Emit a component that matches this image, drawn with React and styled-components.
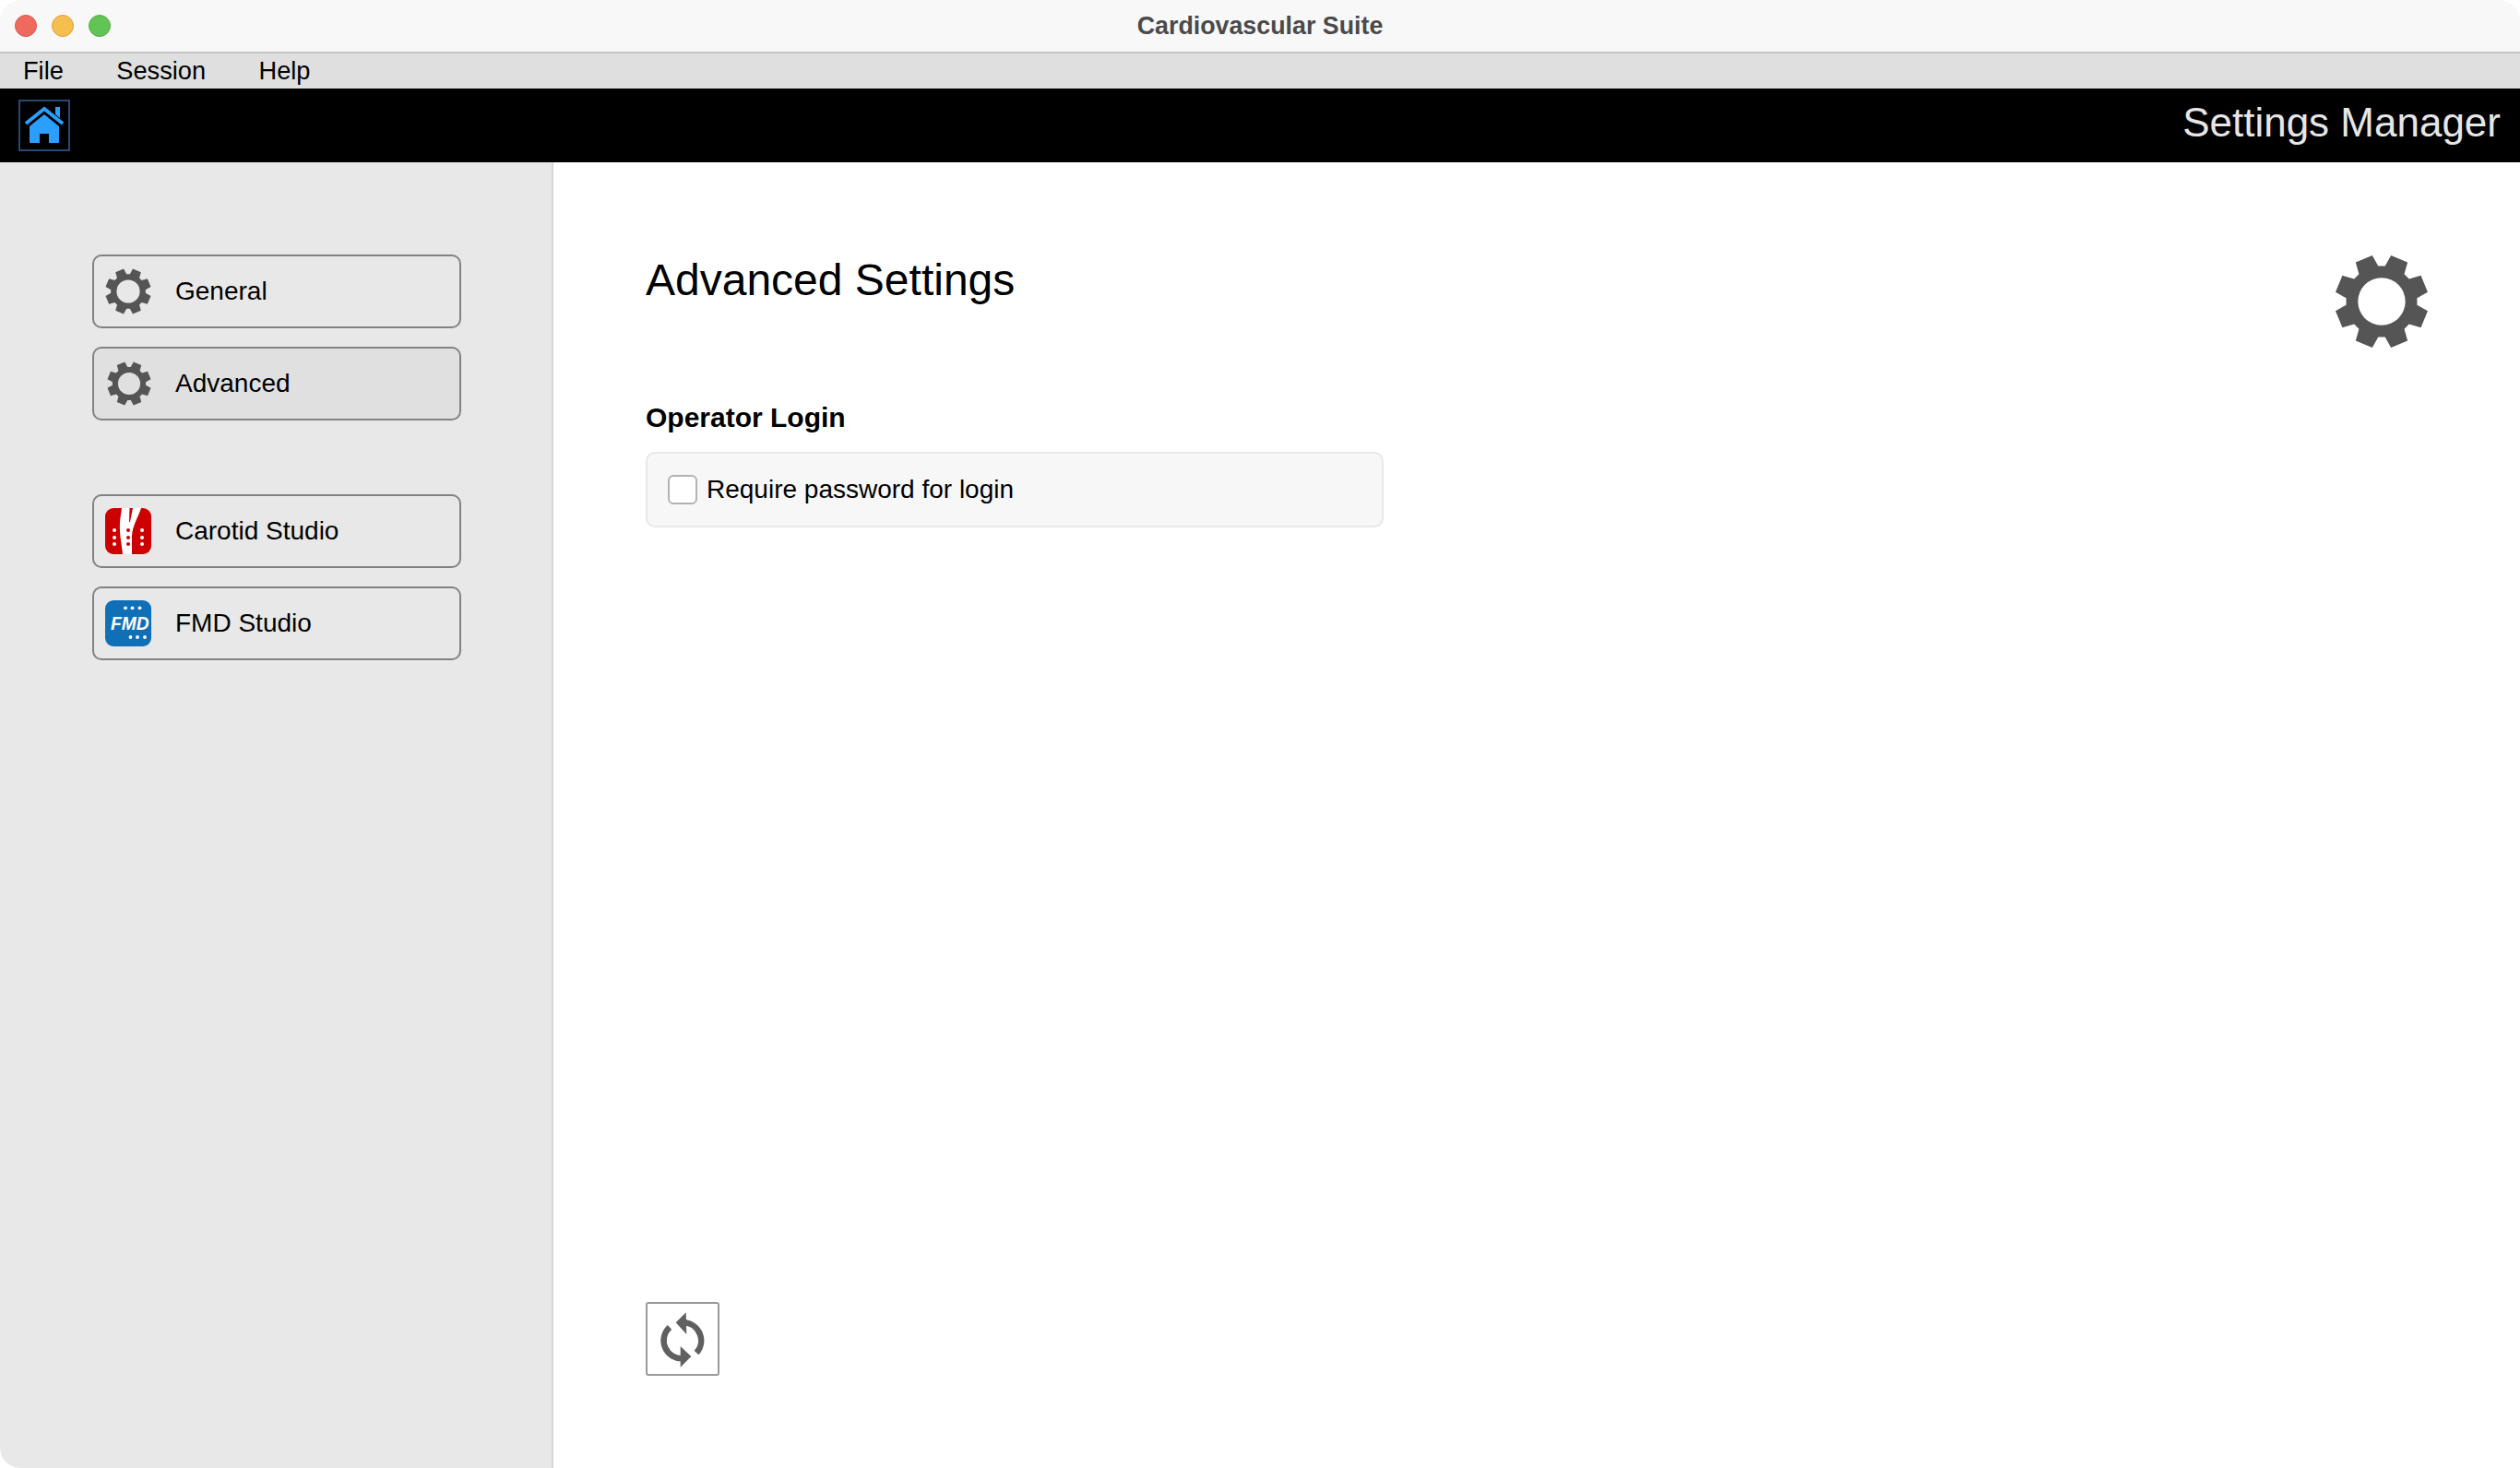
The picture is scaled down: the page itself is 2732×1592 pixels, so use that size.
import React from "react";
import styled, { createGlobalStyle } from "styled-components";

const GlobalStyle = createGlobalStyle`
  html, body {
    margin: 0;
    padding: 0;
    background: #ffffff;
  }
  * {
    box-sizing: border-box;
  }
`;

const Window = styled.div`
  width: 2732px;
  height: 1592px;
  display: flex;
  flex-direction: column;
  overflow: hidden;
  border-radius: 22px;
  font-family: "Liberation Sans", Arial, sans-serif;
  color: #000000;
`;

const TitleBar = styled.div`
  position: relative;
  height: 58px;
  flex: none;
  display: flex;
  align-items: center;
  justify-content: center;
  background: #f8f8f8;
  border-bottom: 2px solid #c4c4c4;
`;

const Lights = styled.div`
  position: absolute;
  left: 16px;
  top: 16px;
  display: flex;
  gap: 16px;
`;

const Light = styled.span`
  width: 24px;
  height: 24px;
  border-radius: 50%;
  background: ${p => p.$color};
  border: 1px solid ${p => p.$edge};
`;

const WindowTitle = styled.div`
  font-size: 26.8px;
  font-weight: bold;
  color: #4a4a4a;
`;

const MenuBar = styled.div`
  height: 38px;
  flex: none;
  display: flex;
  align-items: center;
  padding-left: 25px;
  gap: 57.5px;
  background: #dfdfdf;
  font-size: 27.2px;
`;

const TopBar = styled.div`
  height: 80px;
  flex: none;
  display: flex;
  align-items: center;
  justify-content: space-between;
  padding: 0 21px 0 20px;
  background: #000000;
`;

const HomeButton = styled.div`
  width: 56px;
  height: 56px;
  border: 2px solid #264a73;
`;

const ScreenName = styled.div`
  font-size: 44px;
  color: #e6e6e6;
  margin-top: -6px;
`;

const Body = styled.div`
  flex: 1;
  display: flex;
  min-height: 0;
`;

const Sidebar = styled.div`
  width: 600px;
  flex: none;
  display: flex;
  flex-direction: column;
  padding: 100px 0 0 100px;
  background: #e8e8e8;
  border-right: 2px solid #d6d6d6;
`;

const NavGroup = styled.div`
  display: flex;
  flex-direction: column;
  gap: 20px;
  margin-bottom: 80px;
`;

const NavButton = styled.div`
  width: 400px;
  height: 80px;
  display: flex;
  align-items: center;
  padding-left: 12px;
  gap: 26px;
  border: 2px solid #828282;
  border-radius: 10px;
  background: ${p => (p.$active ? "#e0e0e0" : "#e8e8e8")};
  font-size: 28px;
`;

const IconSlot = styled.span`
  width: 50px;
  height: 50px;
  flex: none;
  display: flex;
  align-items: center;
  justify-content: ${p => (p.$end ? "flex-end" : "center")};
`;

const Content = styled.div`
  flex: 1;
  display: flex;
  flex-direction: column;
  padding: 100px 99px 100px 100px;
  background: #ffffff;
`;

const HeaderRow = styled.div`
  height: 100px;
  flex: none;
  display: flex;
  justify-content: space-between;
  align-items: flex-start;
`;

const PageTitle = styled.h1`
  margin: 0;
  font-size: 48px;
  font-weight: normal;
  line-height: 56px;
`;

const SectionTitle = styled.h2`
  margin: 59px 0 0;
  font-size: 30px;
  font-weight: bold;
  line-height: 36px;
`;

const OptionPanel = styled.div`
  width: 800px;
  height: 82px;
  margin-top: 19px;
  display: flex;
  align-items: center;
  padding-left: 22px;
  gap: 10px;
  background: #f7f7f7;
  border: 2px solid #e8e8e8;
  border-radius: 10px;
  font-size: 28px;
`;

const CheckBox = styled.span`
  width: 32px;
  height: 32px;
  flex: none;
  background: #ffffff;
  border: 2px solid #b2b2b2;
  border-radius: 6px;
`;

const Spacer = styled.div`
  flex: 1;
`;

const ReloadButton = styled.div`
  width: 80px;
  height: 80px;
  border: 2px solid #9a9a9a;
  border-radius: 3px;
  background: #ffffff;
`;

// gear outline: 8 teeth, two of them straddling the top
function gearPath() {
  const pts = [];
  for (let i = 0; i < 8; i++) {
    const mid = 22.5 + i * 45;
    [[mid - 17, 38.6], [mid - 11, 51], [mid + 11, 51], [mid + 17, 38.6]].forEach(([deg, r]) => {
      const a = (deg * Math.PI) / 180;
      pts.push(`${(r * Math.sin(a)).toFixed(2)} ${(-r * Math.cos(a)).toFixed(2)}`);
    });
  }
  return `M${pts.join("L")}Z M25.7 0A25.7 25.7 0 1 0 -25.7 0A25.7 25.7 0 1 0 25.7 0Z`;
}

const Gear = ({ size }) => (
  <svg width={size} height={size} viewBox="-51 -51 102 102">
    <path d={gearPath()} fill="#555555" fillRule="evenodd" />
  </svg>
);

const HomeIcon = () => (
  <svg width="52" height="52" viewBox="0 0 52 52">
    <path d="M6 24 L26 8 L46 24" fill="none" stroke="#2b9fff" strokeWidth="4" />
    <path d="M38 6h5v12l-5-4z" fill="#2b9fff" />
    <path d="M26 14 L42 27 V44 Q42 45 41 45 H31 V35 H21 V45 H11 Q10 45 10 44 V27Z" fill="#2b9fff" />
  </svg>
);

const ReloadIcon = () => (
  <svg width="76" height="76" viewBox="1 1 76 76">
    <path d="M40 21.3 A19.5 19.5 0 0 1 54 54" fill="none" stroke="#606060" strokeWidth="6.5" />
    <path d="M42.7 10.3 L31.7 21.3 L43.3 34Z" fill="#606060" />
    <path d="M25 26.3 A19.5 19.5 0 0 0 40 60.2" fill="none" stroke="#606060" strokeWidth="6.5" />
    <path d="M36.7 47 L48.3 58 L36.7 69.7Z" fill="#606060" />
  </svg>
);

const CarotidIcon = () => {
  const rows = [24, 32, 39];
  return (
    <svg width="50" height="50" viewBox="0 0 50 50">
      <rect width="50" height="50" rx="9" fill="#cc0000" />
      <path d="M18 0 H39 C35 12 30 18 29 30 L29 50 H19 C18 40 16 30 16 24 C15.5 14 17 8 18 0Z" fill="#ffffff" />
      <path d="M26.5 0 H30 L27 15 H26Z" fill="#cc0000" />
      {rows.map(y => (
        <g key={y}>
          <circle cx="10" cy={y} r="2" fill="#ffffff" />
          <circle cx="25" cy={y} r="2" fill="#cc0000" />
          <circle cx="40" cy={y} r="2" fill="#ffffff" />
        </g>
      ))}
    </svg>
  );
};

const FmdIcon = () => (
  <svg width="50" height="50" viewBox="0 0 50 50">
    <rect width="50" height="50" rx="9" fill="#0f70b7" />
    {[22, 29.5, 37.5].map(x => (
      <circle key={x} cx={x} cy="8.3" r="1.9" fill="#ffffff" />
    ))}
    {[27.5, 35, 43].map(x => (
      <circle key={x} cx={x} cy="40" r="1.9" fill="#ffffff" />
    ))}
    <text
      x="6"
      y="32"
      fontFamily="'Liberation Sans', Arial, sans-serif"
      fontSize="21"
      fontWeight="bold"
      fontStyle="italic"
      fill="#ffffff"
      textLength="41.5"
      lengthAdjust="spacingAndGlyphs"
    >
      FMD
    </text>
  </svg>
);

export default function App() {
  return (
    <Window>
      <GlobalStyle />
      <TitleBar>
        <Lights>
          <Light $color="#ee6a5f" $edge="#d9574d" />
          <Light $color="#f5bf4f" $edge="#dca23b" />
          <Light $color="#61c454" $edge="#52ad46" />
        </Lights>
        <WindowTitle>Cardiovascular Suite</WindowTitle>
      </TitleBar>
      <MenuBar>
        <span>File</span>
        <span>Session</span>
        <span>Help</span>
      </MenuBar>
      <TopBar>
        <HomeButton>
          <HomeIcon />
        </HomeButton>
        <ScreenName>Settings Manager</ScreenName>
      </TopBar>
      <Body>
        <Sidebar>
          <NavGroup>
            <NavButton>
              <IconSlot>
                <Gear size={50} />
              </IconSlot>
              General
            </NavButton>
            <NavButton $active>
              <IconSlot $end>
                <Gear size={48} />
              </IconSlot>
              Advanced
            </NavButton>
          </NavGroup>
          <NavGroup>
            <NavButton>
              <IconSlot>
                <CarotidIcon />
              </IconSlot>
              Carotid Studio
            </NavButton>
            <NavButton>
              <IconSlot>
                <FmdIcon />
              </IconSlot>
              FMD Studio
            </NavButton>
          </NavGroup>
        </Sidebar>
        <Content>
          <HeaderRow>
            <PageTitle>Advanced Settings</PageTitle>
            <Gear size={102} />
          </HeaderRow>
          <SectionTitle>Operator Login</SectionTitle>
          <OptionPanel>
            <CheckBox />
            Require password for login
          </OptionPanel>
          <Spacer />
          <ReloadButton>
            <ReloadIcon />
          </ReloadButton>
        </Content>
      </Body>
    </Window>
  );
}
